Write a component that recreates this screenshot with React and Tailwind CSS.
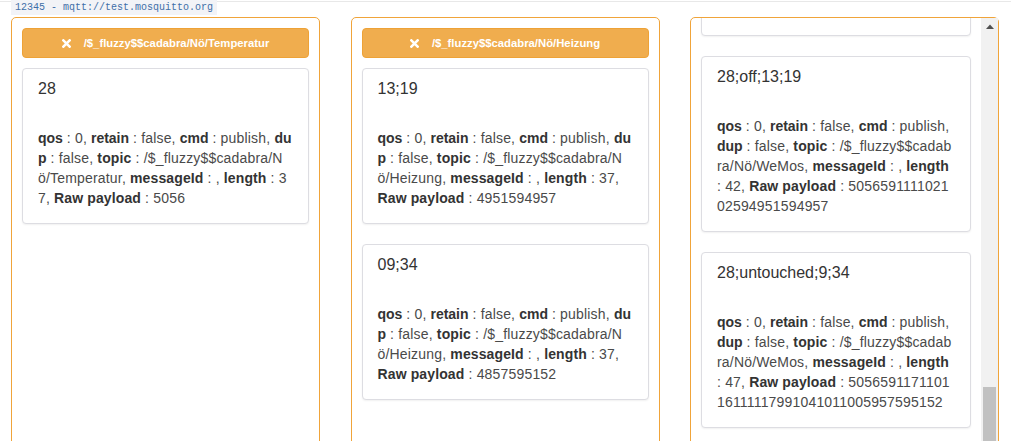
import { useLayoutEffect, useRef } from "react";

const columns = [
    {
        topic: "/$_fluzzy$$cadabra/Nö/Temperatur",
        messages: [
            { value: "28", length: 37, raw: "5056" },
        ],
    },
    {
        topic: "/$_fluzzy$$cadabra/Nö/Heizung",
        messages: [
            { value: "13;19", length: 37, raw: "4951594957" },
            { value: "09;34", length: 37, raw: "4857595152" },
        ],
    },
];

const wemos = {
    topic: "/$_fluzzy$$cadabra/Nö/WeMos",
    messages: [
        { value: "28;off;13;19", length: 42, raw: "505659111102102594951594957" },
        { value: "28;off;13;19", length: 42, raw: "505659111102102594951594957" },
        { value: "28;untouched;9;34", length: 47, raw: "505659117110116111117991041011005957595152" },
    ],
};

function RemoveIcon() {
    return (
        <svg width="9" height="9" viewBox="0 0 10 10" className="shrink-0">
            <path d="M1.5 1.5 L8.5 8.5 M8.5 1.5 L1.5 8.5" stroke="#fff" strokeWidth="2.8" strokeLinecap="square" />
        </svg>
    );
}

function TopicButton({ topic }) {
    return (
        <button className="w-full h-[30px] flex items-center justify-center gap-[13px] rounded-[4px] bg-[#f0ad4e] border border-[#eea236] text-white text-[11.3px] font-bold">
            <RemoveIcon />
            <span>{topic}</span>
        </button>
    );
}

function Field({ name, value, last, tight }) {
    return (
        <>
            <b className={tight ? "font-bold text-[#333] tracking-[-0.05px]" : "font-bold text-[#333] tracking-[0.12px]"}>{name}</b>
            <span> : {value}{last ? "" : ", "}</span>
        </>
    );
}

function MessageCard({ msg, topic, cardRef }) {
    return (
        <div ref={cardRef} className="mt-[20px] first:mt-0 bg-white border border-[#dddde2] rounded-[4px] shadow-[0_1px_2px_rgba(0,0,0,0.06)] pt-[10px] pb-[15px] px-[15px]">
            <div className="text-[16px] leading-[20px] text-[#333] mb-[29px]">{msg.value}</div>
            <div className="text-[14px] leading-[20px] text-[#4a4a4a] tracking-[0.18px] break-all">
                <Field name="qos" value="0" tight />
                <Field name="retain" value="false" tight />
                <Field name="cmd" value="publish" tight />
                <Field name="dup" value="false" tight />
                <Field name="topic" value={topic} />
                <Field name="messageId" value="" />
                <Field name="length" value={msg.length} />
                <Field name="Raw payload" value={msg.raw} last />
            </div>
        </div>
    );
}

function TopicColumn({ col }) {
    return (
        <div className="w-[309px] h-[470px] shrink-0 border border-[#f0a43a] rounded-t-[5px] p-[10px]">
            <TopicButton topic={col.topic} />
            <div className="mt-[10px]">
                {col.messages.map((m, i) => (
                    <MessageCard key={i} msg={m} topic={col.topic} />
                ))}
            </div>
        </div>
    );
}

function ScrollColumn({ col }) {
    const boxRef = useRef(null);
    const cardRef = useRef(null);

    // keep the list scrolled down like in the live view
    useLayoutEffect(() => {
        if (boxRef.current && cardRef.current) {
            boxRef.current.scrollTop = cardRef.current.offsetTop - 38;
        }
    }, []);

    return (
        <div className="w-[309px] h-[470px] shrink-0 border border-[#f0a43a] rounded-t-[5px] flex">
            <div ref={boxRef} className="relative flex-1 overflow-hidden p-[10px]">
                <TopicButton topic={col.topic} />
                <div className="mt-[10px] pb-[120px]">
                    {col.messages.map((m, i) => (
                        <MessageCard key={i} msg={m} topic={col.topic} cardRef={i === 1 ? cardRef : undefined} />
                    ))}
                </div>
            </div>
            <div className="w-[17px] shrink-0 bg-[#f1f1f1] flex flex-col items-center">
                <div className="h-[17px] flex items-center justify-center">
                    <svg width="8" height="5" viewBox="0 0 8 5">
                        <path d="M0 5 L4 0.5 L8 5 Z" fill="#505050" />
                    </svg>
                </div>
                <div className="h-[352px]" />
                <div className="w-[13px] h-[90px] bg-[#c1c1c1]" />
            </div>
        </div>
    );
}

export default function App() {
    return (
        <div className="w-[1011px] h-[441px] overflow-hidden bg-white font-['Liberation_Sans',Arial,sans-serif]">
            <div className="h-[17px] flex items-start">
                <div className="w-[11px] mt-[1px] border-t border-[#e8e8e8]" />
                <code className="h-[15px] px-[4px] bg-[#f2f3f7] text-[#3f6fa8] text-[10px] leading-[15px] font-['Liberation_Mono',monospace]">
                    12345 - mqtt://test.mosquitto.org
                </code>
                <div className="flex-1 mt-[1px] border-t border-[#e8e8e8]" />
            </div>
            <div className="flex gap-[30.5px] px-[11px]">
                {columns.map((c, i) => (
                    <TopicColumn key={i} col={c} />
                ))}
                <ScrollColumn col={wemos} />
            </div>
        </div>
    );
}
